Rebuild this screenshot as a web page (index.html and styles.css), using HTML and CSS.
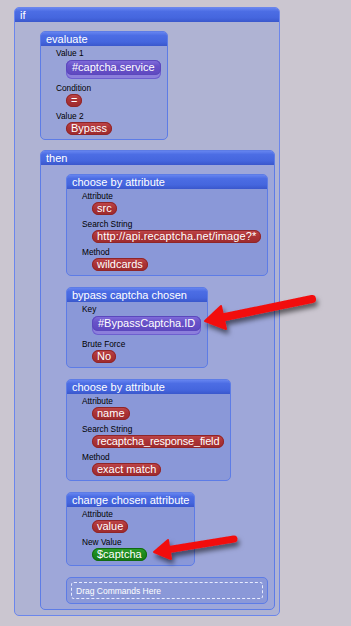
FILE: index.html
```html
<!DOCTYPE html>
<html>
<head>
<meta charset="utf-8">
<link rel="stylesheet" href="styles.css">
</head>
<body>
<div class="block block-if">
  <div class="block-head">if</div>
  <div class="block-body if-body">
    <div class="block block-eval">
      <div class="block-head">evaluate</div>
      <div class="block-body">
        <div class="field-label">Value 1</div>
        <div class="pill pill-var"><span class="pill-var-inner">#captcha.service</span></div>
        <div class="field-label">Condition</div>
        <div class="pill pill-red">=</div>
        <div class="field-label">Value 2</div>
        <div class="pill pill-red">Bypass</div>
      </div>
    </div>
    <div class="block block-then">
      <div class="block-head">then</div>
      <div class="block-body then-body">
        <div class="block block-cmd">
          <div class="block-head">choose by attribute</div>
          <div class="block-body">
            <div class="field-label">Attribute</div>
            <div class="pill pill-red">src</div>
            <div class="field-label">Search String</div>
            <div class="pill pill-red pill-url">http://api.recaptcha.net/image?*</div>
            <div class="field-label">Method</div>
            <div class="pill pill-red">wildcards</div>
          </div>
        </div>
        <div class="block block-cmd">
          <div class="block-head">bypass captcha chosen</div>
          <div class="block-body">
            <div class="field-label">Key</div>
            <div class="pill pill-var"><span class="pill-var-inner">#BypassCaptcha.ID</span></div>
            <div class="field-label">Brute Force</div>
            <div class="pill pill-red">No</div>
          </div>
        </div>
        <div class="block block-cmd">
          <div class="block-head">choose by attribute</div>
          <div class="block-body">
            <div class="field-label">Attribute</div>
            <div class="pill pill-red">name</div>
            <div class="field-label">Search String</div>
            <div class="pill pill-red pill-tight">recaptcha_response_field</div>
            <div class="field-label">Method</div>
            <div class="pill pill-red">exact match</div>
          </div>
        </div>
        <div class="block block-cmd">
          <div class="block-head">change chosen attribute</div>
          <div class="block-body">
            <div class="field-label">Attribute</div>
            <div class="pill pill-red">value</div>
            <div class="field-label">New Value</div>
            <div class="pill pill-green">$captcha</div>
          </div>
        </div>
        <div class="drop-zone"><div class="drop-inner">Drag Commands Here</div></div>
      </div>
    </div>
  </div>
</div>
<svg class="arrows" width="351" height="626" viewBox="0 0 351 626">
  <defs>
    <filter id="shadow" x="-20%" y="-50%" width="140%" height="200%">
      <feDropShadow dx="2" dy="4" stdDeviation="2.5" flood-color="#000" flood-opacity="0.55"/>
    </filter>
  </defs>
  <g filter="url(#shadow)">
    <line x1="312" y1="299" x2="220" y2="318" stroke="#f21010" stroke-width="8" stroke-linecap="round"/>
    <polygon points="205,321 221,306 226,329" fill="#f21010" stroke="#f21010" stroke-width="2" stroke-linejoin="round"/>
  </g>
  <g filter="url(#shadow)">
    <line x1="234" y1="539" x2="166" y2="550" stroke="#f21010" stroke-width="7" stroke-linecap="round"/>
    <polygon points="154,552 168,540 171,559" fill="#f21010" stroke="#f21010" stroke-width="2" stroke-linejoin="round"/>
  </g>
</svg>
</body>
</html>
```

FILE: styles.css
```css
html, body {
  margin: 0;
  padding: 0;
}
body {
  background: #cbc6d0;
  width: 351px;
  height: 626px;
  position: relative;
  overflow: hidden;
  font-family: "Liberation Sans", Arial, sans-serif;
}
.block {
  border: 1px solid #5d7ce6;
  border-radius: 5px;
  overflow: hidden;
  box-sizing: border-box;
}
.block-head {
  height: 14px;
  line-height: 14px;
  padding: 0 5px;
  color: #fff;
  font-size: 11px;
  white-space: nowrap;
  background: linear-gradient(#6584f0 0%, #4c6de4 25%, #4566de 70%, #3a57cc 100%);
}
.block-body {
  padding: 0 6px 0 0;
}
.block-if {
  margin: 7px 0 0 14px;
  width: 266px;
  background: #afb3d3;
  border-color: #6b86ec;
}
.if-body {
  padding: 9px 4px 5px 25px;
}
.block-eval {
  width: fit-content;
  background: #98a3d8;
}
.block-then {
  margin-top: 10px;
  background: #9ea7d9;
}
.then-body {
  padding: 9px 6px 5px 25px;
  display: flex;
  flex-direction: column;
  align-items: flex-start;
  gap: 11px;
}
.block-cmd {
  background: #8a98d8;
}
.field-label {
  font-size: 8.3px;
  line-height: 10px;
  margin-top: 2px;
  padding-left: 15px;
  color: #000;
  white-space: nowrap;
}
.pill {
  display: table;
  margin: 1px 0 4px 25px;
  height: 13px;
  line-height: 13px;
  padding: 0 5px;
  border-radius: 7px;
  color: #fff;
  font-size: 11px;
  white-space: nowrap;
  box-sizing: border-box;
}
.pill-url {
  letter-spacing: 0.13px;
}
.pill-tight {
  letter-spacing: -0.15px;
}
.pill-red {
  background: linear-gradient(#c0484b 0%, #ab3336 45%, #9d2a2d 100%);
  box-shadow: inset 0 0 0 1px #8f2528;
}
.pill-green {
  background: linear-gradient(#2fa02f 0%, #1d8a1d 45%, #157a15 100%);
  box-shadow: inset 0 0 0 1px #106a10;
}
.pill-var {
  height: 19px;
  padding: 0;
  margin: 2px 0 4px 25px;
  border-radius: 6px;
  background: #8c7fdc;
  box-shadow: inset 0 0 0 1px #6d5fcf;
}
.pill-var-inner {
  display: block;
  height: 15px;
  line-height: 15px;
  padding: 0 6px;
  border-radius: 6px;
  background: linear-gradient(#8470de 0%, #6852c8 40%, #5f48c0 100%);
  box-shadow: inset 0 0 0 1px #5b48bd;
}
.drop-zone {
  align-self: stretch;
  height: 27px;
  border: 1px solid #5d7ce6;
  border-radius: 5px;
  background: #8a98d8;
  padding: 4px;
  box-sizing: border-box;
}
.drop-inner {
  height: 100%;
  border: 1px dashed #e8ecff;
  border-radius: 3px;
  box-sizing: border-box;
  color: #fff;
  font-size: 8.5px;
  line-height: 17px;
  padding-left: 4px;
}
.arrows {
  position: absolute;
  left: 0;
  top: 0;
  pointer-events: none;
}
```
